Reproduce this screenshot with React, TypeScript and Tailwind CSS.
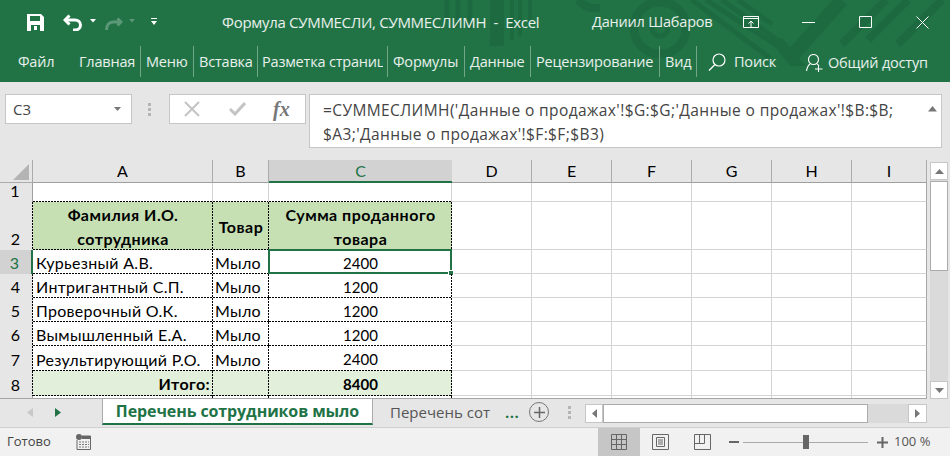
import React from 'react';

const ui = "font-['Open_Sans','Noto_Sans',sans-serif]";
const sheet = "font-['Lato','Liberation_Sans',sans-serif]";

const TitlePattern = () => (
  <svg className="absolute left-0 top-0 pointer-events-none" width="950" height="82" viewBox="0 0 950 82" fill="none" stroke="#1d6a40">
    <path d="M447 0V20M458 0V28M470 0V30" strokeWidth="5" />
    <path d="M497 0V46" strokeWidth="14" />
    <path d="M512 0V40M520 0V36M530 0V22" strokeWidth="4" />
    <path d="M578 0A25 25 0 0 0 600 8" strokeWidth="8" />
    <circle cx="660" cy="28" r="26" strokeWidth="9" />
    <circle cx="660" cy="28" r="8" strokeWidth="5" />
    <path d="M692 0L770 58M706 0L784 50M722 0L780 42M738 0L772 24" strokeWidth="5" />
    <path d="M790 58L842 0" strokeWidth="14" />
    <path d="M770 40L790 66H806L782 38Z" fill="#1d6a40" stroke="none" />
    <path d="M842 44L886 0M868 40L908 0M898 44L942 0" strokeWidth="8" />
  </svg>
);

const Save = () => (
  <svg width="17" height="17" viewBox="0 0 17 17" className="shrink-0">
    <path fillRule="evenodd" fill="#fff" d="M0 0H14L17 3V17H0ZM3 2V7H13V2ZM4 11V17H13V11ZM7 12H10V16H7Z" />
  </svg>
);

const Caret = ({ dim }: { dim?: boolean }) => (
  <svg width="6" height="4" viewBox="0 0 6 4"><path d="M0 0H6L3 3.5Z" fill={dim ? '#5a9877' : '#fff'} /></svg>
);

const QuickBar = () => (
  <div className="flex items-center w-[222px] shrink-0 pl-[27px]">
    <Save />
    <svg width="20" height="17" viewBox="0 0 20 17" className="ml-[19px]" fill="none" stroke="#fff" strokeWidth="3">
      <path d="M6.5 1.5L2 6L6.5 10.5" />
      <path d="M2.5 6H12C15 6 17.5 8 17.5 11C17.5 14 15 16 12 16H10" />
    </svg>
    <span className="ml-[7px] mb-[2px] flex"><Caret /></span>
    <svg width="18" height="14" viewBox="0 0 18 14" className="ml-[9px] mt-[4px]" fill="none" stroke="#5a9877" strokeWidth="3">
      <path d="M12.5 1.5L16 5L12.5 8.5" />
      <path d="M15.5 5H8C4 5 1.5 8 1.5 13" />
    </svg>
    <span className="ml-[6px] mb-[2px] flex"><Caret dim /></span>
    <svg width="6" height="8" viewBox="0 0 6 8" className="ml-[16px]" fill="#fff">
      <path d="M0 0H6V1H0ZM0 3H6L3 7Z" />
    </svg>
  </div>
);

const WindowButtons = () => (
  <div className="flex items-center">
    <svg width="16" height="12" viewBox="0 0 16 12" className="ml-[31px]" fill="none" stroke="#fff">
      <path d="M.5.5H15.5V11.5H.5ZM.5 2.5H15.5" />
      <path d="M8 11V5M5.5 7.5L8 5L10.500 7.500" />
    </svg>
    <svg width="13" height="1" viewBox="0 0 13 1" className="ml-[43px]"><path d="M0 .5H13" stroke="#fff" /></svg>
    <svg width="13" height="12" viewBox="0 0 13 12" className="ml-[44px]" fill="none" stroke="#fff"><path d="M.5.5H12.5V11.5H.5Z" /></svg>
    <svg width="13" height="13" viewBox="0 0 13 13" className="ml-[44px]" fill="none" stroke="#fff"><path d="M.5.5L12.500 12.500M12.500.5L.5 12.500" /></svg>
  </div>
);

const TabSep = () => <span className="w-px h-[31px] bg-[#6fa788] shrink-0" />;

const RibbonTabs = () => (
  <div className="h-[38px] flex items-center pb-[3px] text-white/90 text-[14.5px] tracking-[-0.2px] whitespace-nowrap">
    <span className="ml-[18px] w-[61px] shrink-0">Файл</span>
    <span className="w-[61px] shrink-0">Главная</span>
    <TabSep />
    <span className="w-[52px] shrink-0 pl-[5px]">Меню</span>
    <TabSep />
    <span className="w-[63px] shrink-0 pl-[5px]">Вставка</span>
    <TabSep />
    <span className="w-[125px] mr-[4px] shrink-0 pl-[4px] overflow-hidden">Разметка страниц</span>
    <TabSep />
    <span className="w-[76px] shrink-0 pl-[5px]">Формулы</span>
    <TabSep />
    <span className="w-[65px] shrink-0 pl-[5px]">Данные</span>
    <TabSep />
    <span className="w-[128px] shrink-0 pl-[5px]">Рецензирование</span>
    <TabSep />
    <span className="w-[36px] shrink-0 pl-[5px]">Вид</span>
    <TabSep />
    <svg width="18" height="18" viewBox="0 0 18 18" className="ml-[11px] shrink-0" fill="none" stroke="#fff" strokeWidth="1.2">
      <circle cx="11" cy="7" r="6" />
      <path d="M7 11.500L1 17.500" />
    </svg>
    <span className="ml-[8px] w-[72px] shrink-0">Поиск</span>
    <svg width="17" height="18" viewBox="0 0 17 18" className="shrink-0 mt-[2px]" fill="none" stroke="#fff" strokeWidth="1.100">
      <circle cx="7.500" cy="5.500" r="5" />
      <path d="M4 10C2 11.500 1 14 .5 17M11 10C12 10.500 12.500 11 13 12M12.500 12V18M9 15H16.500" />
    </svg>
    <span className="ml-[5px] mt-[2px]">Общий доступ</span>
  </div>
);

const FormulaBar = () => (
  <div className="h-[78px] bg-[#e6e6e6] flex items-start pt-[12px] shrink-0 text-[#444]">
    <div className="ml-[5px] w-[127px] h-[30px] bg-white border border-[#c6c6c6] flex items-center justify-between pl-[7px] pr-[10px] text-[15px]">
      <span>C3</span>
      <svg width="7" height="4" viewBox="0 0 7 4"><path d="M0 0H7L3.500 4Z" fill="#777" /></svg>
    </div>
    <div className="ml-[16px] w-[4px] h-[30px] flex flex-col justify-center gap-[2px]">
      <span className="size-[3px] bg-[#b5b5b5]" />
      <span className="size-[3px] bg-[#b5b5b5]" />
      <span className="size-[3px] bg-[#b5b5b5]" />
    </div>
    <div className="ml-[17px] w-[137px] h-[30px] bg-white border border-[#c6c6c6] flex items-center">
      <svg width="16" height="16" viewBox="0 0 16 16" className="ml-[14px]" fill="none" stroke="#c4c4c4" strokeWidth="2"><path d="M1 1L15 15M15 1L1 15" /></svg>
      <svg width="17" height="14" viewBox="0 0 17 14" className="ml-[29px]" fill="none" stroke="#c4c4c4" strokeWidth="3"><path d="M1 7L6 12L16 1" /></svg>
      <span className="ml-[27px] font-['Liberation_Serif',serif] italic font-bold text-[20px] leading-none text-[#777]">fx</span>
    </div>
    <div className="ml-[3px] w-[633px] h-[54px] bg-white border border-[#c6c6c6] relative pl-[13px] pt-[3px] text-[15.500px] leading-[24px] whitespace-nowrap tracking-[0.4px]">
      <div>=СУММЕСЛИМН('Данные о продажах'!$G:$G;'Данные о продажах'!$B:$B;</div>
      <div>$A3;'Данные о продажах'!$F:$F;$B3)</div>
      <svg width="9" height="6" viewBox="0 0 9 6" className="absolute right-[4px] top-[11px]"><path d="M0 5.500L4.500 0L9 5.500Z" fill="#777" /></svg>
    </div>
  </div>
);

// cut-copy marching ants: 2px on, 1px off
const antsBox = 'bg-no-repeat bg-[repeating-linear-gradient(90deg,#000_0_2px,transparent_2px_3px),repeating-linear-gradient(180deg,#000_0_2px,transparent_2px_3px)] bg-[size:100%_1px,1px_100%] bg-[position:0_100%,100%_0]';
const antsBottom = 'bg-no-repeat bg-[repeating-linear-gradient(90deg,#000_0_2px,transparent_2px_3px)] bg-[size:100%_1px] bg-bottom';
const antsRight = 'bg-no-repeat bg-[repeating-linear-gradient(180deg,#000_0_2px,transparent_2px_3px)] bg-[size:1px_100%] bg-right';

const ColHead = ({ label, active }: { label: string; active?: boolean }) => (
  <div className={active
    ? 'h-[23px] bg-[#d2d2d2] border-b-2 border-[#217346] text-[#217346] flex items-center justify-center'
    : 'h-[23px] bg-[#e6e6e6] border-r border-b border-r-[#ababab] border-b-[#9f9f9f] flex items-center justify-center'}>
    {label}
  </div>
);

const RowHead = ({ n, h, active, cut }: { n: number; h: string; active?: boolean; cut?: boolean }) => (
  <div className={[
    h,
    active ? 'bg-[#d2d2d2] text-[#217346] border-r-2 border-r-[#217346]' : 'bg-[#e6e6e6]',
    !active && cut ? antsRight : '',
    !active && !cut ? 'border-r border-r-[#9f9f9f]' : '',
    'flex items-end justify-center pr-[2px] leading-[22px]',
  ].join(' ')}>
    <span>{n}</span>
  </div>
);

const Blank = ({ last, h }: { last?: boolean; h: string }) => (
  <div className={[h, 'border-b border-[#d4d4d4]', last ? 'border-r border-r-[#a6a6a6]' : 'border-r'].join(' ')} />
);

const BlankRow = ({ h }: { h: string }) => (
  <>
    <Blank h={h} /><Blank h={h} /><Blank h={h} /><Blank h={h} /><Blank h={h} /><Blank h={h} last />
  </>
);

const rows = [
  { n: 3, name: 'Курьезный А.В.', sum: '2400', h: 'h-[24px]' },
  { n: 4, name: 'Интригантный С.П.', sum: '1200', h: 'h-[24px]' },
  { n: 5, name: 'Проверочный О.К.', sum: '1200', h: 'h-[24px]' },
  { n: 6, name: 'Вымышленный Е.А.', sum: '1200', h: 'h-[24px]' },
  { n: 7, name: 'Результирующий Р.О.', sum: '2400', h: 'h-[25px]' },
];

const Grid = () => (
  <div className={`${sheet} w-[927px] shrink-0 bg-white grid grid-cols-[33px_180px_56px_183px_80px_80px_80px_80px_80px_75px] text-[16px] text-black content-start border-b border-b-[#a6a6a6]`}>
    <div className="h-[23px] bg-[#e6e6e6] border-r border-b border-[#ababab] flex items-end justify-end pr-[3px] pb-[2px]">
      <svg width="16" height="16" viewBox="0 0 16 16"><path d="M16 0V16H0Z" fill="#b4b4b4" /></svg>
    </div>
    <ColHead label="A" />
    <ColHead label="B" />
    <ColHead label="C" active />
    <ColHead label="D" />
    <ColHead label="E" />
    <ColHead label="F" />
    <ColHead label="G" />
    <ColHead label="H" />
    <ColHead label="I" />

    <RowHead n={1} h="h-[19px]" />
    <div className={`h-[19px] border-r border-[#d4d4d4] ${antsBottom}`} />
    <div className={`h-[19px] border-r border-[#d4d4d4] ${antsBottom}`} />
    <div className={`h-[19px] border-r border-[#d4d4d4] ${antsBottom}`} />
    <BlankRow h="h-[19px]" />

    <RowHead n={2} h="h-[48px]" cut />
    <div className={`h-[48px] bg-[#c6e0b4] ${antsBox} font-bold text-center leading-[24px] pt-px tracking-[0.5px]`}>Фамилия И.О.<br />сотрудника</div>
    <div className={`h-[48px] bg-[#c6e0b4] ${antsBox} font-bold flex items-center justify-center pt-[2px] tracking-[0.5px]`}>Товар</div>
    <div className={`h-[48px] bg-[#c6e0b4] ${antsBox} font-bold text-center leading-[24px] pt-px tracking-[0.5px]`}>Сумма проданного<br />товара</div>
    <BlankRow h="h-[48px]" />

    {rows.map((r) => (
      <React.Fragment key={r.n}>
        <RowHead n={r.n} h={r.h} cut active={r.n === 3} />
        <div className={`${r.h} ${antsBox} pl-[3px] pt-[2px] flex items-center whitespace-nowrap tracking-[0.3px]`}>{r.name}</div>
        <div className={`${r.h} ${antsBox} pl-[2px] pt-[2px] flex items-center tracking-[0.3px]`}>Мыло</div>
        <div className={`${r.h} ${antsBox} pt-[2px] flex items-center justify-center relative text-[15px]`}>
          {r.sum}
          {r.n === 3 && (
            <>
              <span className="absolute -left-px -top-px right-0 bottom-0 border-2 border-[#217346]" />
              <span className="absolute -right-[2px] -bottom-[2px] size-[6px] bg-[#217346] border border-white" />
            </>
          )}
        </div>
        <BlankRow h={r.h} />
      </React.Fragment>
    ))}

    <RowHead n={8} h="h-[25px]" cut />
    <div className={`h-[25px] bg-[#e2efda] ${antsBox} font-bold flex items-center justify-end pr-[3px] pt-px tracking-[0.4px]`}>Итого:</div>
    <div className={`h-[25px] bg-[#e2efda] ${antsBox}`} />
    <div className={`h-[25px] bg-[#e2efda] ${antsBox} font-bold flex items-center justify-center pt-px text-[15px]`}>8400</div>
    <BlankRow h="h-[25px]" />

    <div className="h-[2px] bg-[#e6e6e6] border-r border-[#9f9f9f]" />
    <div className={`h-[2px] ${antsRight}`} />
    <div className={`h-[2px] ${antsRight}`} />
    <div className={`h-[2px] ${antsRight}`} />
    <div className="h-[2px] border-r border-[#d4d4d4]" />
    <div className="h-[2px] border-r border-[#d4d4d4]" />
    <div className="h-[2px] border-r border-[#d4d4d4]" />
    <div className="h-[2px] border-r border-[#d4d4d4]" />
    <div className="h-[2px] border-r border-[#d4d4d4]" />
    <div className="h-[2px] border-r border-[#a6a6a6]" />
  </div>
);

const VScroll = () => (
  <div className="flex-1 bg-[#e6e6e6] flex flex-col items-start pl-[3px] pt-[2px]">
    <div className="w-[18px] h-[18px] bg-white border border-[#c6c6c6] flex items-center justify-center">
      <svg width="9" height="5" viewBox="0 0 9 5"><path d="M0 5L4.500 0L9 5Z" fill="#777" /></svg>
    </div>
    <div className="w-[18px] flex-1 bg-[#dadada] flex flex-col">
      <div className="h-[90px] mt-px bg-white border border-[#ababab]" />
    </div>
    <div className="w-[18px] h-[18px] bg-white border border-[#c6c6c6] flex items-center justify-center">
      <svg width="9" height="5" viewBox="0 0 9 5"><path d="M0 0L4.500 5L9 0Z" fill="#777" /></svg>
    </div>
  </div>
);

const SheetTabs = () => (
  <div className="h-[29px] bg-[#e6e6e6] border-b border-[#d0d0d0] flex items-start shrink-0 text-[15px]">
    <div className="w-[102px] h-[26px] flex items-center shrink-0">
      <svg width="6" height="9" viewBox="0 0 6 9" className="ml-[27px]"><path d="M6 0V9L0 4.500Z" fill="#c8c8c8" /></svg>
      <svg width="6" height="9" viewBox="0 0 6 9" className="ml-[22px]"><path d="M0 0V9L6 4.500Z" fill="#217346" /></svg>
    </div>
    <div className="w-[271px] h-[26px] bg-white border-x border-[#ababab] border-b-2 border-b-[#217346] flex items-center justify-center shrink-0 font-bold text-[#217346] text-[16px] tracking-[-0.1px] whitespace-nowrap">
      Перечень сотрудников мыло
    </div>
    <div className="w-[156px] h-[26px] pl-[17px] flex items-center shrink-0 text-[#555] whitespace-nowrap">
      Перечень сот
      <span className="ml-[15px] text-[#217346] font-bold tracking-[0.5px]">...</span>
    </div>
    <span className="mt-[3px] size-[20px] rounded-full border border-[#777] flex items-center justify-center shrink-0">
      <svg width="11" height="11" viewBox="0 0 11 11"><path d="M5.500 0V11M0 5.500H11" stroke="#666" strokeWidth="1.500" /></svg>
    </span>
    <div className="ml-[19px] w-[4px] h-[26px] flex flex-col justify-center gap-[2px] shrink-0">
      <span className="size-[3px] bg-[#b5b5b5]" />
      <span className="size-[3px] bg-[#b5b5b5]" />
      <span className="size-[3px] bg-[#b5b5b5]" />
    </div>
    <div className="ml-[13px] mt-[5px] h-[19px] w-[342px] flex shrink-0">
      <div className="w-[18px] bg-white border border-[#c6c6c6] flex items-center justify-center">
        <svg width="5" height="9" viewBox="0 0 5 9"><path d="M5 0V9L0 4.500Z" fill="#777" /></svg>
      </div>
      <div className="flex-1 flex bg-[#dadada] pr-[2px]">
        <div className="w-[265px] bg-white border border-[#ababab]" />
      </div>
      <div className="w-[19px] bg-white border border-[#c6c6c6] flex items-center justify-center">
        <svg width="5" height="9" viewBox="0 0 5 9"><path d="M0 0V9L5 4.500Z" fill="#777" /></svg>
      </div>
    </div>
  </div>
);

const StatusBar = () => (
  <div className="flex-1 bg-[#f1f1f1] flex items-center text-[#444] text-[13px]">
    <span className="ml-[7px] w-[69px] shrink-0">Готово</span>
    <svg width="15" height="16" viewBox="0 0 15 16" className="shrink-0" fill="none">
      <circle cx="3" cy="3" r="3" fill="#666" />
      <path d="M1 6V15.500H14.500V2H6" stroke="#666" />
      <path d="M6 2H14.500V5H6Z" fill="#666" />
      <path d="M3 8H13M3 10.500H13M3 13H13" stroke="#777" strokeDasharray="2 1" />
    </svg>
    <div className="ml-[507px] w-[42px] h-full bg-[#c6c6c6] flex items-center justify-center shrink-0">
      <svg width="16" height="16" viewBox="0 0 16 16" fill="none" stroke="#666"><path d="M.5.5H15.500V15.500H.5ZM.5 5.500H15.500M.5 10.500H15.500M5.500.5V15.500M10.500.5V15.500" /></svg>
    </div>
    <svg width="17" height="16" viewBox="0 0 17 16" className="ml-[12px] shrink-0" fill="none" stroke="#666">
      <path d="M.5.5H16.500V15.500H.5ZM4.500 3.500H12.500V12.500H4.500ZM6 6H11M6 8H11M6 10H11" />
    </svg>
    <svg width="17" height="16" viewBox="0 0 17 16" className="ml-[25px] shrink-0" fill="none" stroke="#666">
      <path d="M.5.5H16.500V15.500H.5ZM.5 9.500H10.500V.5M5.500.5V9.500" />
    </svg>
    <span className="ml-[18px] w-[10px] h-[2px] bg-[#666] shrink-0" />
    <div className="ml-[4px] w-[125px] h-[14px] flex items-center shrink-0 relative">
      <span className="w-full h-px bg-[#aaa]" />
      <span className="absolute left-[60px] top-0 w-[6px] h-[14px] bg-[#666]" />
    </div>
    <svg width="11" height="11" viewBox="0 0 11 11" className="ml-[9px] shrink-0"><path d="M5.500 0V11M0 5.500H11" stroke="#666" strokeWidth="2" /></svg>
    <span className="ml-[6px] whitespace-nowrap text-[#555]">100 %</span>
  </div>
);

export default function App() {
  return (
    <div className={`${ui} w-[950px] h-[456px] flex flex-col overflow-hidden bg-[#e6e6e6] text-black`}>
      <div className="h-[82px] bg-[#217346] relative shrink-0">
        <TitlePattern />
        <div className="relative">
          <div className="h-[44px] flex items-center text-white/90 text-[14.500px] whitespace-nowrap">
            <QuickBar />
            <span className="w-[370px] shrink-0 text-[15px] tracking-[-0.3px] whitespace-pre">Формула СУММЕСЛИ, СУММЕСЛИМН  -  Excel</span>
            <span className="shrink-0 tracking-[-0.2px]">Даниил Шабаров</span>
            <WindowButtons />
          </div>
          <RibbonTabs />
        </div>
      </div>
      <FormulaBar />
      <div className="h-[239px] flex shrink-0">
        <Grid />
        <VScroll />
      </div>
      <SheetTabs />
      <StatusBar />
    </div>
  );
}
